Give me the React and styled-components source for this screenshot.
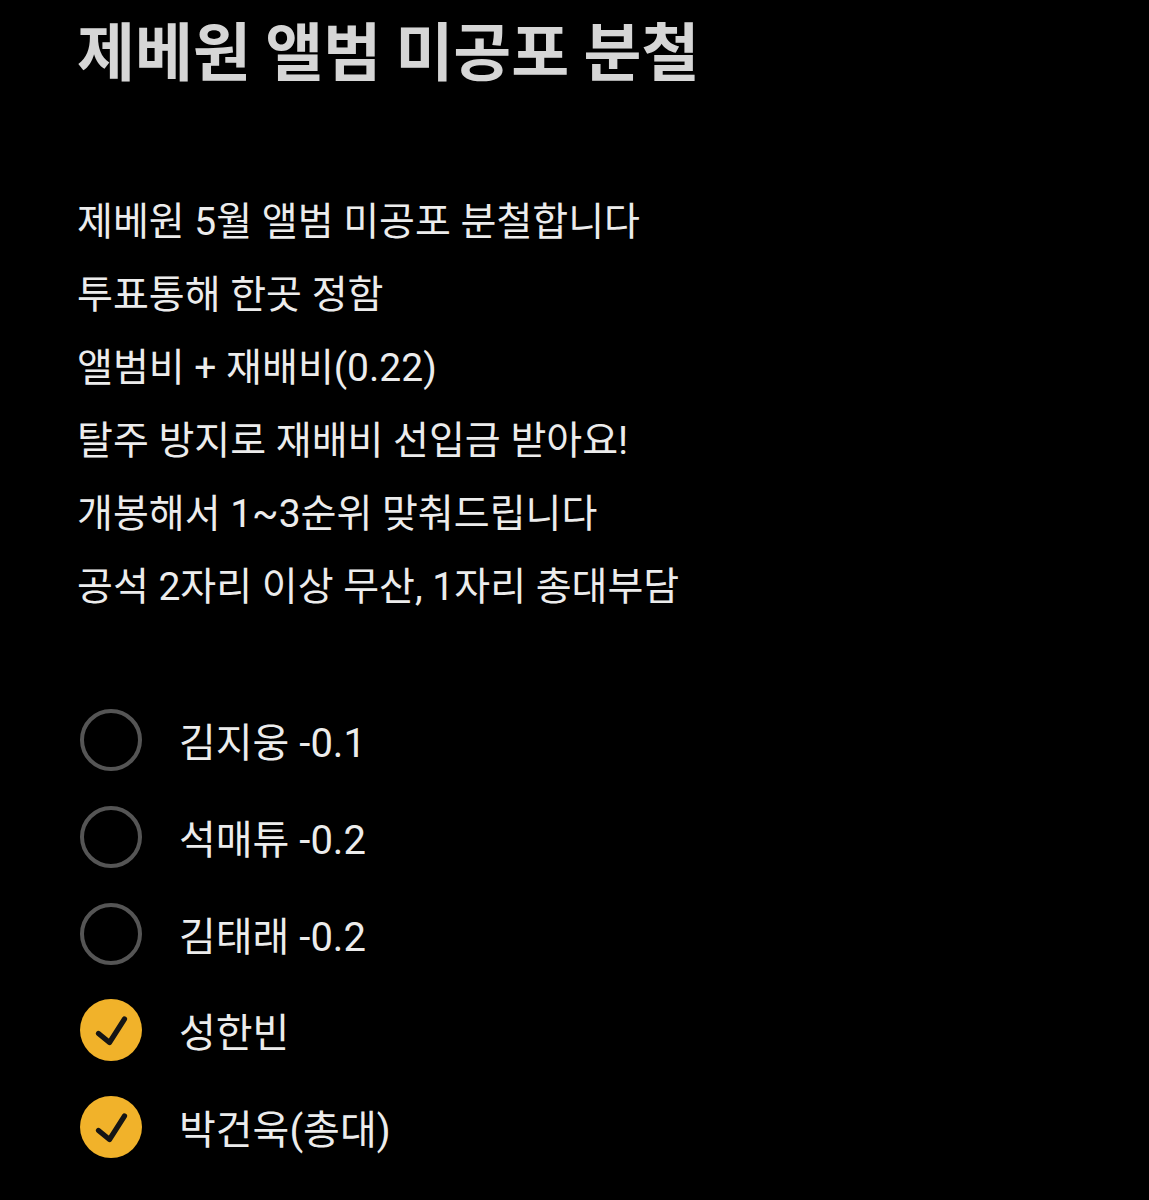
import React from "react";
import styled, { createGlobalStyle } from "styled-components";

const GlobalStyle = createGlobalStyle`
  html, body {
    margin: 0;
    padding: 0;
    background: #000;
  }
  body {
    font-family: Roboto, "Noto Sans CJK KR", sans-serif;
    -webkit-font-smoothing: antialiased;
  }
`;

const Page = styled.div`
  min-height: 1200px;
  background: #000;
  padding: 8px 0 0 77px;
  box-sizing: border-box;
`;

const Title = styled.h1`
  margin: 0;
  font-family: "Noto Sans CJK KR", sans-serif;
  font-size: 63px;
  font-weight: 700;
  line-height: 80px;
  color: #d6d6d6;
`;

const Body = styled.div`
  margin-top: 98px;
`;

const Line = styled.p`
  margin: 0;
  font-size: 39px;
  font-weight: 400;
  line-height: 73px;
  color: #ececec;
`;

const Options = styled.ul`
  list-style: none;
  margin: 68px 0 0;
  padding: 0;
  display: flex;
  flex-direction: column;
`;

const Option = styled.li`
  display: flex;
  align-items: center;
  gap: 37px;
  height: 96.7px;
  margin-left: 3px;
`;

const Radio = styled.span`
  width: 62px;
  height: 62px;
  flex: none;
  box-sizing: border-box;
  border-radius: 50%;
  display: flex;
  align-items: center;
  justify-content: center;
  border: ${({ $checked }) => ($checked ? "none" : "4px solid #555")};
  background: ${({ $checked }) => ($checked ? "#f1b22a" : "transparent")};
`;

const Label = styled.span`
  padding-top: 8px;
  font-size: 40px;
  line-height: 1;
  color: #ececec;
`;

const CheckMark = () => (
  <svg width="40" height="40" viewBox="0 0 40 40" fill="none">
    <path
      d="M7.5 23.5 L18.5 32.5 L33.5 9"
      stroke="#151515"
      strokeWidth="5.2"
      strokeLinecap="round"
      strokeLinejoin="round"
    />
  </svg>
);

const lines = [
  "제베원 5월 앨범 미공포 분철합니다",
  "투표통해 한곳 정함",
  "앨범비 + 재배비(0.22)",
  "탈주 방지로 재배비 선입금 받아요!",
  "개봉해서 1~3순위 맞춰드립니다",
  "공석 2자리 이상 무산, 1자리 총대부담",
];

const members = [
  { name: "김지웅 -0.1", taken: false },
  { name: "석매튜 -0.2", taken: false },
  { name: "김태래 -0.2", taken: false },
  { name: "성한빈", taken: true },
  { name: "박건욱(총대)", taken: true },
];

export default function App() {
  return (
    <>
      <GlobalStyle />
      <Page>
        <Title>제베원 앨범 미공포 분철</Title>
        <Body>
          {lines.map((text) => (
            <Line key={text}>{text}</Line>
          ))}
        </Body>
        <Options>
          {members.map((m) => (
            <Option key={m.name}>
              <Radio $checked={m.taken}>{m.taken && <CheckMark />}</Radio>
              <Label>{m.name}</Label>
            </Option>
          ))}
        </Options>
      </Page>
    </>
  );
}
